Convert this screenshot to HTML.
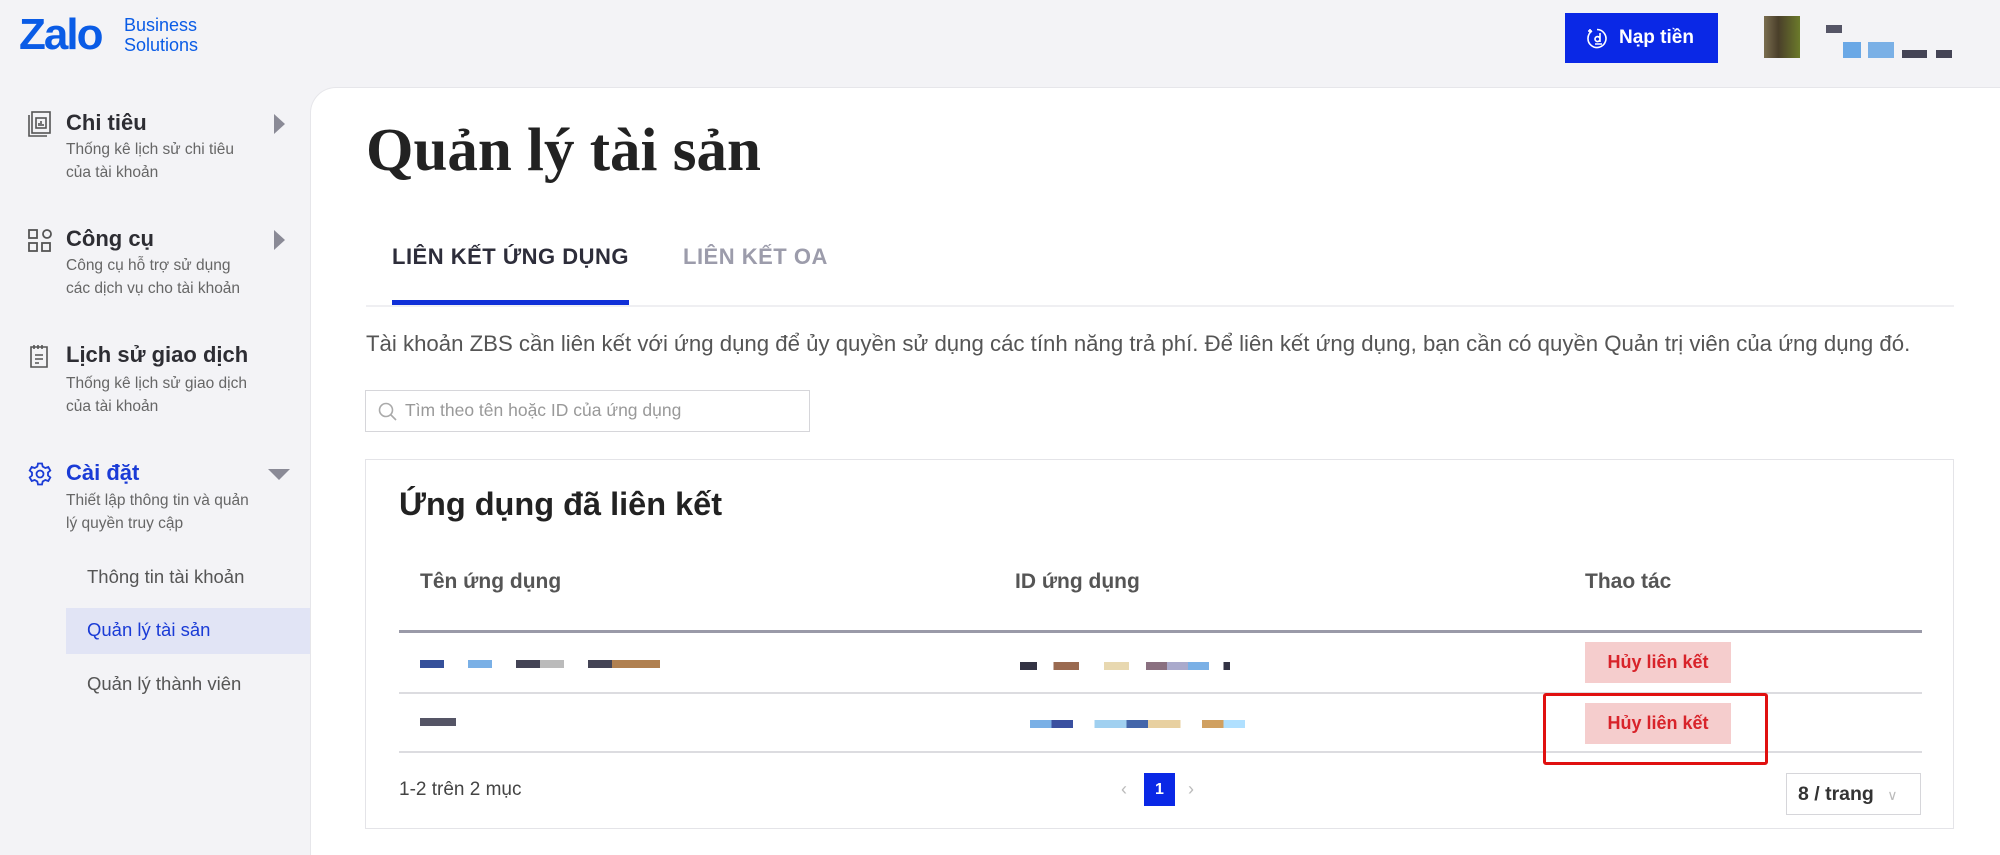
<!DOCTYPE html>
<html><head><meta charset="utf-8"><style>
*{margin:0;padding:0;box-sizing:border-box}
html,body{width:2000px;height:855px;overflow:hidden}
body{background:#f3f3f6;font-family:"Liberation Sans",sans-serif;color:#333;position:relative}
.a{position:absolute;white-space:nowrap}
.nt{font-size:22px;font-weight:bold;color:#2d2d33}
.sub{font-size:15.5px;color:#666;line-height:23px}
.ic{position:absolute;left:28px}
.arr{position:absolute;width:0;height:0;border-top:10px solid transparent;border-bottom:10px solid transparent;border-left:11px solid #8a8a96}
.btn{position:absolute;background:#f5cdcd;color:#d8232a;font-weight:bold;font-size:18px;text-align:center;line-height:41px;width:146px;height:41px}
.th{font-size:21px;color:#555;font-weight:bold;top:570px}
.pix{position:absolute;height:8px}
.si{font-size:18.5px}
</style></head><body>
<div class="a" style="left:19px;top:10px;font-size:44px;font-weight:bold;color:#0a5ce6;letter-spacing:-2px">Zalo</div>
<div class="a" style="left:124px;top:15px;font-size:18px;line-height:20px;color:#0a5ce6">Business<br>Solutions</div>
<div class="a" style="left:1565px;top:13px;width:153px;height:50px;background:#0a28e6;color:#fff;font-weight:bold;font-size:19px;line-height:50px;padding-left:54px">Nạp tiền</div>
<svg class="a" style="left:1586px;top:27px" width="22" height="22" viewBox="0 0 22 22" fill="none" stroke="#fff" stroke-width="1.6"><path d="M6 4a9 9 0 1 0 5-1.5"/><path d="M4 2v4M2 4h4"/><path d="M14 6v9M14 12a2.5 2.5 0 1 0 0 .1M9 17h7"/></svg>
<div class="a" style="left:1764px;top:16px;width:36px;height:42px;background:linear-gradient(90deg,#7a6e50,#4a3f2a 40%,#6b7a2a)"></div>
<div class="pix" style="left:1826px;top:25px;width:16px;background:#556"></div>
<div class="pix" style="left:1843px;top:42px;width:18px;background:#6aa8e6;height:16px"></div>
<div class="pix" style="left:1868px;top:42px;width:26px;background:#7ab0e6;height:16px"></div>
<div class="pix" style="left:1902px;top:50px;width:25px;background:#445"></div>
<div class="pix" style="left:1936px;top:50px;width:16px;background:#445"></div>
<svg class="ic" style="top:111px" width="24" height="26" viewBox="0 0 24 26" fill="none" stroke="#555" stroke-width="1.6"><rect x="4" y="1" width="18" height="21"/><path d="M1 4v21h18"/><rect x="8" y="7" width="10" height="10"/><path d="M11 15v-3M13 15v-5M15 15v-2"/></svg>
<div class="a nt" style="left:66px;top:110px">Chi tiêu</div>
<div class="arr" style="left:274px;top:114px"></div>
<div class="a sub" style="left:66px;top:138px">Thống kê lịch sử chi tiêu<br>của tài khoản</div>
<svg class="ic" style="top:229px" width="24" height="24" viewBox="0 0 24 24" fill="none" stroke="#555" stroke-width="1.8"><rect x="1" y="1" width="8" height="8"/><circle cx="19" cy="5" r="4"/><rect x="1" y="14" width="8" height="8"/><rect x="14" y="14" width="8" height="8"/></svg>
<div class="a nt" style="left:66px;top:226px">Công cụ</div>
<div class="arr" style="left:274px;top:230px"></div>
<div class="a sub" style="left:66px;top:254px">Công cụ hỗ trợ sử dụng<br>các dịch vụ cho tài khoản</div>
<svg class="ic" style="top:344px" width="24" height="26" viewBox="0 0 24 26" fill="none" stroke="#555" stroke-width="1.6"><path d="M3 3h16v20H3z"/><path d="M6 1v4M10 1v4M14 1v4M7 11h8M7 15h8M7 19h4"/></svg>
<div class="a nt" style="left:66px;top:342px">Lịch sử giao dịch</div>
<div class="a sub" style="left:66px;top:372px">Thống kê lịch sử giao dịch<br>của tài khoản</div>
<svg class="ic" style="top:462px" width="24" height="24" viewBox="0 0 24 24" fill="none" stroke="#1a3bd6" stroke-width="1.8"><circle cx="12" cy="12" r="3.5"/><path d="M10 1.5h4l.7 3 2.6 1.5 3-1 2 3.5-2.3 2v3l2.3 2-2 3.5-3-1-2.6 1.5-.7 3h-4l-.7-3-2.6-1.5-3 1-2-3.5 2.3-2v-3l-2.3-2 2-3.5 3 1 2.6-1.5z"/></svg>
<div class="a nt" style="left:66px;top:460px;color:#1a3bd6">Cài đặt</div>
<div class="a" style="left:268px;top:469px;width:0;height:0;border-left:11px solid transparent;border-right:11px solid transparent;border-top:11px solid #8a8a96"></div>
<div class="a sub" style="left:66px;top:489px">Thiết lập thông tin và quản<br>lý quyền truy cập</div>
<div class="a si" style="left:87px;top:566px;color:#555">Thông tin tài khoản</div>
<div class="a" style="left:66px;top:608px;width:244px;height:46px;background:#e1e4f5"></div>
<div class="a si" style="left:87px;top:619px;color:#1a3bd6">Quản lý tài sản</div>
<div class="a si" style="left:87px;top:673px;color:#555">Quản lý thành viên</div>
<div class="a" style="left:310px;top:87px;width:1690px;height:768px;background:#fff;border:1px solid #e6e6ea;border-right:none;border-bottom:none;border-radius:26px 0 0 0"></div>
<div class="a" style="left:366px;top:116px;font-family:'Liberation Serif',serif;font-weight:bold;font-size:61px;color:#222">Quản lý tài sản</div>
<div class="a" style="left:392px;top:244px;font-size:22px;font-weight:bold;color:#2d2d3a;letter-spacing:.5px">LIÊN KẾT ỨNG DỤNG</div>
<div class="a" style="left:683px;top:244px;font-size:22px;font-weight:bold;color:#9c9cab;letter-spacing:.5px">LIÊN KẾT OA</div>
<div class="a" style="left:366px;top:305px;width:1588px;height:2px;background:#efeff2"></div>
<div class="a" style="left:392px;top:300px;width:237px;height:5px;background:#1030d8"></div>
<div class="a" style="left:366px;top:331px;font-size:22.2px;color:#555">Tài khoản ZBS cần liên kết với ứng dụng để ủy quyền sử dụng các tính năng trả phí. Để liên kết ứng dụng, bạn cần có quyền Quản trị viên của ứng dụng đó.</div>
<div class="a" style="left:365px;top:390px;width:445px;height:42px;border:1.5px solid #d6d6da;background:#fff"></div>
<svg class="a" style="left:378px;top:402px" width="19" height="19" viewBox="0 0 19 19" fill="none" stroke="#aaa" stroke-width="1.6"><circle cx="8" cy="8" r="6.5"/><path d="M13 13l5 5"/></svg>
<div class="a" style="left:405px;top:400px;font-size:17.5px;color:#999">Tìm theo tên hoặc ID của ứng dụng</div>
<div class="a" style="left:365px;top:459px;width:1589px;height:370px;border:1.5px solid #e4e4e8;background:#fff"></div>
<div class="a" style="left:399px;top:486px;font-size:32.5px;font-weight:bold;color:#222">Ứng dụng đã liên kết</div>
<div class="a th" style="left:420px">Tên ứng dụng</div>
<div class="a th" style="left:1015px">ID ứng dụng</div>
<div class="a th" style="left:1585px">Thao tác</div>
<div class="a" style="left:399px;top:630px;width:1523px;height:3px;background:#9a9aa8"></div>
<div class="a" style="left:399px;top:692px;width:1523px;height:1.5px;background:#dcdce0"></div>
<div class="a" style="left:399px;top:751px;width:1523px;height:1.5px;background:#dcdce0"></div>
<div class="pix" style="left:420px;top:660px;width:240px;background:linear-gradient(90deg,#35509a 0 10%,#fff 10% 20%,#7ab0e6 20% 30%,#fff 30% 40%,#445 40% 50%,#bbb 50% 60%,#fff 60% 70%,#445 70% 80%,#b08050 80% 100%)"></div>
<div class="pix" style="left:1020px;top:662px;width:210px;background:linear-gradient(90deg,#334 0 8%,#fff 8% 16%,#9a6a50 16% 28%,#fff 28% 40%,#e8d8b0 40% 52%,#fff 52% 60%,#8a7080 60% 70%,#aac 70% 80%,#7ab0e6 80% 90%,#fff 90% 97%,#334 97%)"></div>
<div class="pix" style="left:420px;top:718px;width:36px;background:#556"></div>
<div class="pix" style="left:1030px;top:720px;width:215px;background:linear-gradient(90deg,#7ab0e6 0 10%,#3a50a0 10% 20%,#fff 20% 30%,#a0d0f0 30% 45%,#4466aa 45% 55%,#e8d0a0 55% 70%,#fff 70% 80%,#d0a060 80% 90%,#b0e0ff 90%)"></div>
<div class="btn" style="left:1585px;top:642px">Hủy liên kết</div>
<div class="btn" style="left:1585px;top:703px">Hủy liên kết</div>
<div class="a" style="left:1543px;top:693px;width:225px;height:72px;border:3px solid #e01010;border-radius:3px"></div>
<div class="a" style="left:399px;top:779px;font-size:19px;color:#444">1-2 trên 2 mục</div>
<div class="a" style="left:1121px;top:779px;font-size:18px;color:#bbb">‹</div>
<div class="a" style="left:1144px;top:773px;width:31px;height:33px;background:#0a28e6;color:#fff;font-weight:bold;font-size:16px;text-align:center;line-height:33px">1</div>
<div class="a" style="left:1188px;top:779px;font-size:18px;color:#bbb">›</div>
<div class="a" style="left:1786px;top:773px;width:135px;height:42px;border:1.5px solid #d6d6da;font-size:19.5px;color:#333;font-weight:bold;line-height:40px;padding-left:11px">8 / trang <span style="color:#bbb;font-weight:normal;font-size:14px;margin-left:8px">∨</span></div>
</body></html>
